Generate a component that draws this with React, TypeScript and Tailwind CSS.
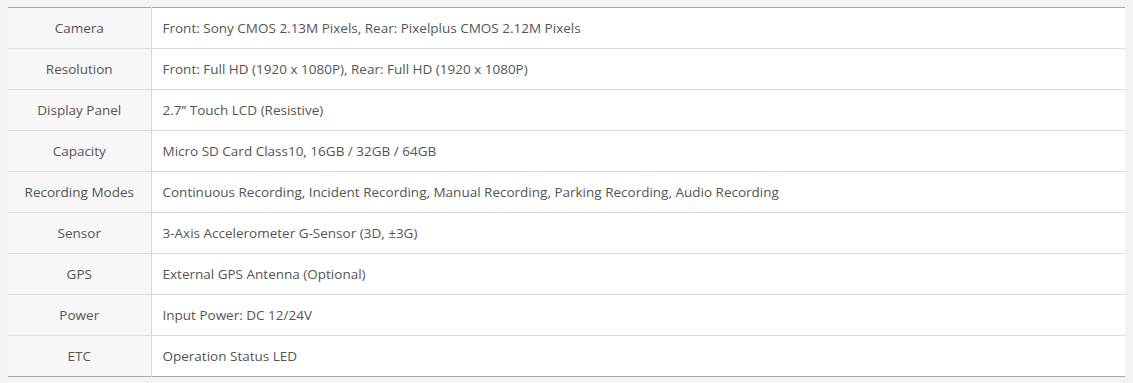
const ROWS: [string, string][] = [
  ["Camera", "Front: Sony CMOS 2.13M Pixels, Rear: Pixelplus CMOS 2.12M Pixels"],
  ["Resolution", "Front: Full HD (1920 x 1080P), Rear: Full HD (1920 x 1080P)"],
  ["Display Panel", "2.7\u201D Touch LCD (Resistive)"],
  ["Capacity", "Micro SD Card Class10, 16GB / 32GB / 64GB"],
  ["Recording Modes", "Continuous Recording, Incident Recording, Manual Recording, Parking Recording, Audio Recording"],
  ["Sensor", "3-Axis Accelerometer G-Sensor (3D, \u00B13G)"],
  ["GPS", "External GPS Antenna (Optional)"],
  ["Power", "Input Power: DC 12/24V"],
  ["ETC", "Operation Status LED"],
];

export default function App() {
  return (
    <div className="w-[1133px] h-[383px] bg-[#f3f3f3] pt-[7px] pl-[8px] pr-[8px] font-['Open_Sans',sans-serif] text-[13.5px] text-[#555]">
      <table className="w-full border-collapse border-t border-b border-t-[#a9a9a9] border-b-[#a9a9a9]">
        <tbody>
          {ROWS.map(([k, v], i) => (
            <tr key={k} className={i > 0 ? "border-t border-[#dcdcdc]" : ""}>
              <th className="w-[143px] h-[41px] bg-[#f7f7f7] font-normal text-center border-r border-[#dcdcdc] p-0">
                {k}
              </th>
              <td className="bg-white pl-[11px] h-[41px] p-0">{v}</td>
            </tr>
          ))}
        </tbody>
      </table>
    </div>
  );
}
